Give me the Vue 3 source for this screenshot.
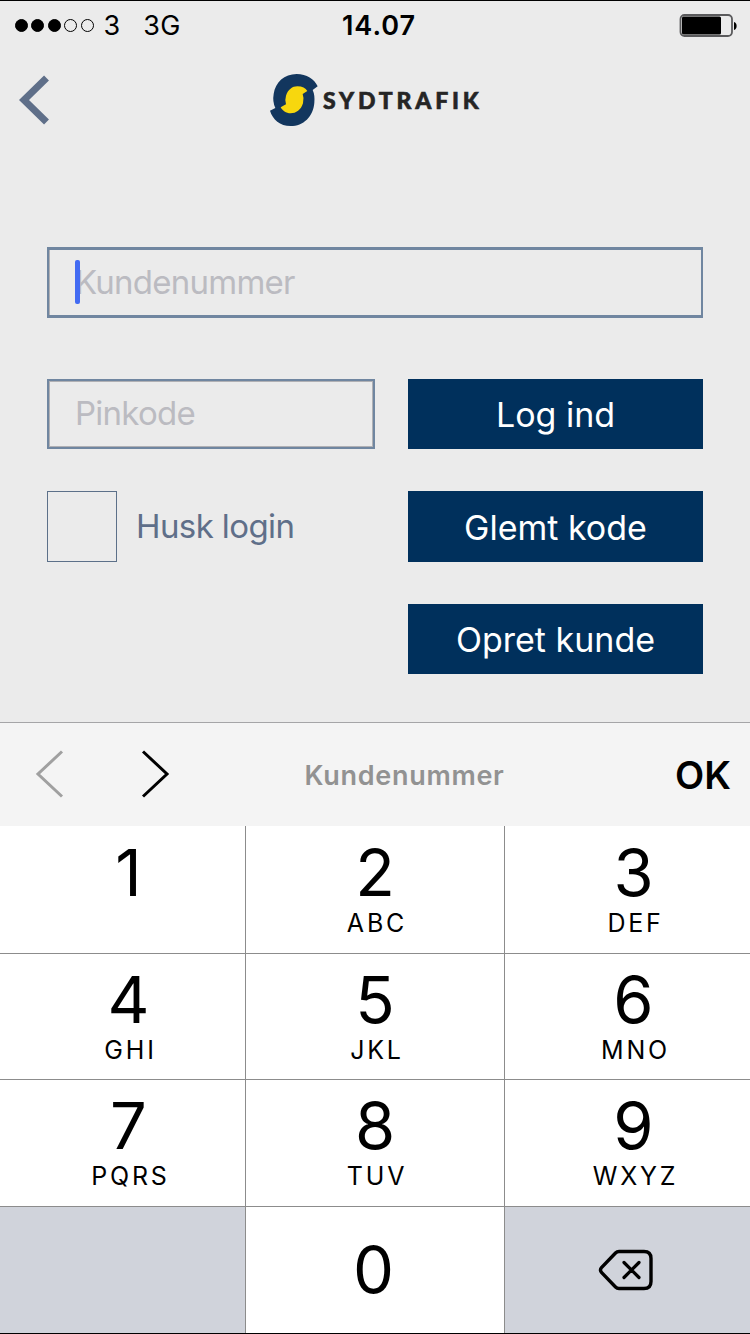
<script setup>
  import { ref } from "vue";

  const customerNumber = ref("");
  const pinCode = ref("");

  const signal = [true, true, true, false, false];

  const keys = [
    { digit: "1", letters: "" },
    { digit: "2", letters: "ABC" },
    { digit: "3", letters: "DEF" },
    { digit: "4", letters: "GHI" },
    { digit: "5", letters: "JKL" },
    { digit: "6", letters: "MNO" },
    { digit: "7", letters: "PQRS" },
    { digit: "8", letters: "TUV" },
    { digit: "9", letters: "WXYZ" },
  ];

  const press = (digit) => {
    customerNumber.value += digit;
  };

  const erase = () => {
    customerNumber.value = customerNumber.value.slice(0, -1);
  };
</script>

<template>
  <main class="screen">
    <header class="status-bar">
      <div class="status-bar__left">
        <div class="signal">
          <span
            v-for="(on, i) in signal"
            :key="i"
            class="signal__dot"
            :class="{ 'signal__dot--on': on }"></span>
        </div>
        <span class="status-bar__carrier">3</span>
        <span class="status-bar__network">3G</span>
      </div>
      <span class="status-bar__time">14.07</span>
      <div class="status-bar__right">
        <svg class="battery" viewBox="0 0 60 24">
          <rect x="1.5" y="1" width="51.5" height="21" rx="4" fill="none" stroke="#5a5a5c" stroke-width="1.8" />
          <rect x="3" y="2.5" width="39" height="18" rx="1.5" />
          <path d="M55 8 C58.500 8.500 58.500 15.500 55 16 Z" />
        </svg>
      </div>
    </header>

    <nav class="nav-bar">
      <svg class="nav-bar__back" viewBox="0 0 34 50">
        <path d="M27.500 3 L5 25 L27.500 47" fill="none" stroke="#5f6f89" stroke-width="7" />
      </svg>
      <div class="brand">
        <svg class="brand__mark" viewBox="42 39 150 162">
          <path
            fill="#12365e"
            d="M188 79 L173 90 Q180 105 178 128 C175 170 145 198 107 198 C75 198 53 178 45 152 L61 144 Q52 125 56 102 C61 67 88 42 125 42 C155 42 178 57 188 79 Z" />
          <path
            fill="#f7d70e"
            d="M157 93 L143 102 Q148 115 144 130 C138 150 123 160 107 160 C93 160 82 152 77 142 L93 133 Q89 119 93 107 C99 89 112 79 127 79 C142 79 152 85 157 93 Z" />
        </svg>
        <span class="brand__name">SYDTRAFIK</span>
      </div>
    </nav>

    <form class="login" @submit.prevent>
      <div class="field">
        <span class="field__caret"></span>
        <input v-model="customerNumber" class="field__input" placeholder="Kundenummer" />
      </div>
      <div class="login__row">
        <div class="field field--pin">
          <input v-model="pinCode" class="field__input" placeholder="Pinkode" />
        </div>
        <button class="action">Log ind</button>
      </div>
      <div class="login__row login__row--remember">
        <label class="remember">
          <span class="remember__box"></span>
          <span class="remember__text">Husk login</span>
        </label>
        <button type="button" class="action action--forgot">Glemt kode</button>
      </div>
      <div class="login__row login__row--create">
        <button type="button" class="action">Opret kunde</button>
      </div>
    </form>

    <section class="toolbar">
      <div class="toolbar__arrows">
        <svg class="toolbar__arrow" viewBox="0 0 30 50">
          <path d="M27 2.500 L3 25 L27 47.500" fill="none" stroke="#a0a0a0" stroke-width="3" />
        </svg>
        <svg class="toolbar__arrow" viewBox="0 0 30 50">
          <path d="M3 2.500 L27 25 L3 47.500" fill="none" stroke="#000" stroke-width="3" />
        </svg>
      </div>
      <span class="toolbar__title">Kundenummer</span>
      <span class="toolbar__done">OK</span>
    </section>

    <section class="keypad">
      <div v-for="key in keys" :key="key.digit" class="key" @click="press(key.digit)">
        <span class="key__digit">{{ key.digit }}</span>
        <span class="key__letters">{{ key.letters }}</span>
      </div>
      <div class="key key--muted"></div>
      <div class="key key--zero" @click="press('0')">
        <span class="key__digit">0</span>
      </div>
      <div class="key key--muted" @click="erase">
        <svg class="key__erase" viewBox="0 0 56 42">
          <path
            d="M21 2.500 H46 Q53 2.500 53 9.500 V32.500 Q53 39.500 46 39.500 H21 Q19 39.500 17.500 38 L3.500 23.500 Q1.500 21 3.500 18.500 L17.500 4 Q19 2.500 21 2.500 Z"
            fill="none"
            stroke="#000"
            stroke-width="3.400" />
          <path d="M26 13.500 L41 28.500 M41 13.500 L26 28.500" fill="none" stroke="#000" stroke-width="3.200" stroke-linecap="round" />
        </svg>
      </div>
    </section>
  </main>
</template>

<style>
  body {
    margin: 0;
    background: #ebebeb;
  }
</style>

<style scoped>
  .screen {
    display: flex;
    flex-direction: column;
    box-sizing: border-box;
    width: 750px;
    height: 1334px;
    overflow: hidden;
    border-block: 1px solid #000;
    background: #ebebeb;
    color: #000;
    font-family: Inter, "Liberation Sans", sans-serif;
  }

  .status-bar {
    display: grid;
    grid-template-columns: 1fr auto 1fr;
    align-items: center;
    height: 49px;
    padding-inline: 15px 12px;
    font-size: 27px;
    line-height: 32px;
  }

  .status-bar__left {
    display: flex;
    align-items: center;
  }

  .signal {
    display: flex;
    gap: 3.4px;
  }

  .signal__dot {
    box-sizing: border-box;
    width: 13px;
    height: 13px;
    border: 1.5px solid #000;
    border-radius: 50%;
  }

  .signal__dot--on {
    background: #000;
  }

  .status-bar__carrier {
    margin-inline-start: 10px;
  }

  .status-bar__network {
    margin-inline-start: 23px;
    letter-spacing: 0.3px;
  }

  .status-bar__time {
    padding-inline-start: 5px;
    font-weight: 600;
    letter-spacing: 1px;
  }

  .status-bar__right {
    display: flex;
    justify-content: flex-end;
  }

  .battery {
    width: 60px;
    height: 24px;
    margin-inline-end: -1px;
  }

  .nav-bar {
    display: grid;
    grid-template-columns: 250px 250px 250px;
    align-items: center;
    height: 100px;
  }

  .nav-bar__back {
    width: 34px;
    height: 50px;
    margin-inline-start: 19px;
  }

  .brand {
    display: flex;
    align-items: center;
    margin-inline-start: 19px;
  }

  .brand__mark {
    flex: none;
    width: 50px;
    height: 54px;
  }

  .brand__name {
    margin-inline-start: 4px;
    color: #252525;
    font-family: Lato, sans-serif;
    font-size: 23px;
    font-weight: 900;
    letter-spacing: 3.8px;
    line-height: 28px;
    -webkit-text-stroke: 0.6px #252525;
  }

  .login {
    display: flex;
    flex-direction: column;
    flex: 1;
    padding: 97px 47px 0;
  }

  .field {
    display: flex;
    align-items: center;
    box-sizing: border-box;
    height: 71px;
    padding: 0 0 2px 26px;
    border: 3px solid #7086a0;
    border-inline-width: 2px;
    box-shadow: inset 1px 0 #b0b0b4;
  }

  .field--pin {
    width: 328px;
    height: 70px;
    border-width: 2px;
    box-shadow: inset 0 0 0 1px #b0b0b4;
  }

  .field__caret {
    width: 5px;
    height: 44px;
    margin-inline-end: -5px;
    border-radius: 2px;
    background: #426bf2;
    z-index: 1;
  }

  .field__input {
    flex: 1;
    min-width: 0;
    padding: 0;
    border: 0;
    outline: 0;
    background: none;
    font: 33px/40px Inter, sans-serif;
    letter-spacing: -0.75px;
  }

  .field__input::placeholder {
    color: #bbbbc1;
    opacity: 1;
  }

  .login__row {
    display: flex;
    justify-content: space-between;
    margin-block-start: 61px;
  }

  .login__row--remember {
    margin-block-start: 42px;
  }

  .login__row--create {
    justify-content: flex-end;
    margin-block-start: 42px;
  }

  .action {
    width: 295px;
    height: 70px;
    padding: 2px 0 0;
    border: 0;
    background: #00305c;
    color: #fff;
    font: 34px/40px Inter, sans-serif;
  }

  .action--forgot {
    height: 71px;
  }

  .remember {
    display: flex;
    align-items: center;
  }

  .remember__box {
    box-sizing: border-box;
    width: 70px;
    height: 71px;
    border: 1px solid #5c7089;
  }

  .remember__text {
    margin-inline-start: 19px;
    padding-block-end: 2px;
    color: #5f6f89;
    font-size: 33px;
    letter-spacing: -0.6px;
    line-height: 40px;
  }

  .toolbar {
    display: grid;
    grid-template-columns: 254px 301px 1fr;
    align-items: center;
    box-sizing: border-box;
    height: 104px;
    padding-inline-end: 19px;
    border-block-start: 1px solid #a5a5a7;
    background: #f4f4f4;
  }

  .toolbar__arrows {
    display: flex;
    gap: 75px;
    padding: 0 0 2px 35px;
  }

  .toolbar__arrow {
    flex: none;
    width: 30px;
    height: 50px;
  }

  .toolbar__title {
    padding-block-start: 2px;
    color: #929292;
    font-size: 27px;
    font-weight: 600;
    letter-spacing: 0.7px;
    text-align: center;
  }

  .toolbar__done {
    justify-self: end;
    font-size: 38px;
    font-weight: 600;
  }

  .keypad {
    display: grid;
    grid-template-columns: 245px 258px 245px;
    grid-template-rows: 127px 125px 126px 126px;
    gap: 1px;
    background: #8c8c8c;
  }

  .key {
    display: flex;
    flex-direction: column;
    align-items: center;
    background: #fff;
  }

  /* outer columns sit slightly right of their centre */
  .key:nth-child(3n + 1),
  .key:nth-child(3n) {
    padding-inline-start: 12px;
  }

  .key__digit {
    margin-block-start: 15px;
    font-size: 65px;
    line-height: 64px;
  }

  .key:nth-child(n + 4) .key__digit {
    margin-block-start: 14px;
  }

  .key__letters {
    margin: 3px 0 0 4px;
    font-size: 25px;
    letter-spacing: 2.8px;
    line-height: 30px;
  }

  .key--zero,
  .key--muted {
    justify-content: center;
  }

  .key.key--zero .key__digit {
    margin: 0 3px 0 0;
  }

  .key.key--muted {
    padding-inline-start: 0;
    background: #d0d3db;
  }

  .key__erase {
    width: 56px;
    height: 42px;
    margin-inline-end: 4px;
  }
</style>
